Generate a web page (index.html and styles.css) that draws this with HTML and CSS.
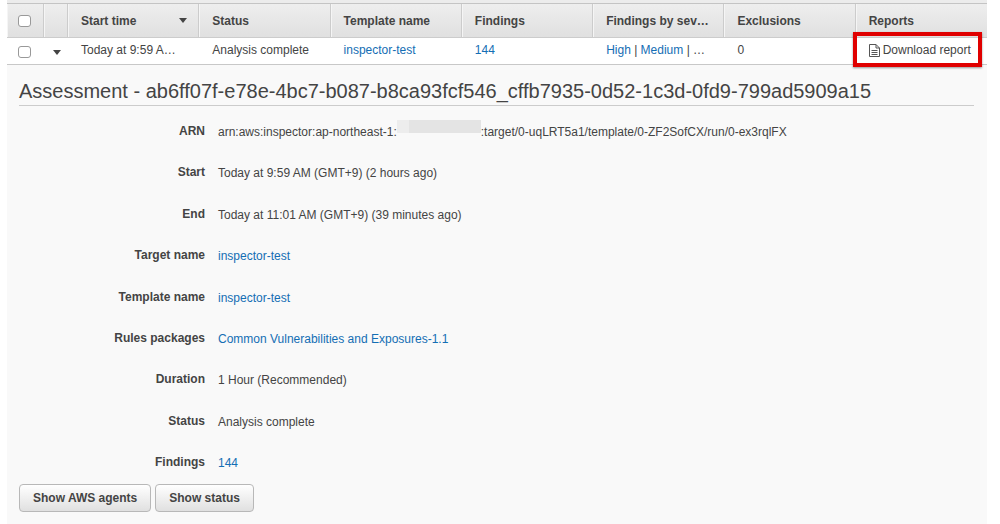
FILE: index.html
```html
<!DOCTYPE html>
<html lang="en">
<head>
<meta charset="utf-8">
<meta name="viewport" content="width=device-width, initial-scale=1">
<title>Assessment runs</title>
<link rel="stylesheet" href="styles.css">
</head>
<body>
<main class="panel">
  <table class="runs">
    <colgroup>
      <col class="col-check"><col class="col-toggle"><col><col><col><col><col><col><col>
    </colgroup>
    <thead>
      <tr>
        <th class="check"><input type="checkbox" aria-label="Select all runs"></th>
        <th></th>
        <th><span class="sortable">Start time <span class="caret"></span></span></th>
        <th>Status</th>
        <th>Template name</th>
        <th>Findings</th>
        <th>Findings by sev…</th>
        <th>Exclusions</th>
        <th>Reports</th>
      </tr>
    </thead>
    <tbody>
      <tr>
        <td class="check"><input type="checkbox" aria-label="Select run"></td>
        <td class="toggle"><button class="expander" type="button" aria-label="Collapse run" aria-expanded="true"><span class="caret"></span></button></td>
        <td>Today at 9:59 A…</td>
        <td>Analysis complete</td>
        <td><a href="#">inspector-test</a></td>
        <td><a href="#">144</a></td>
        <td><a href="#">High</a> | <a href="#">Medium</a> | …</td>
        <td>0</td>
        <td class="report">
          <a class="download" href="#"><svg class="doc" viewBox="0 0 11 13" aria-hidden="true"><path d="M.5 .5H7L10.500 4V12.500H.5ZM7 .5V4H10.500M2.500 6.500H8.500M2.500 8.500H8.500M2.500 10.500H8.500"/></svg>Download report</a>
          <span class="highlight"></span>
        </td>
      </tr>
    </tbody>
  </table>

  <section class="detail">
    <h1>Assessment - ab6ff07f-e78e-4bc7-b087-b8ca93fcf546_cffb7935-0d52-1c3d-0fd9-799ad5909a15</h1>
    <dl class="fields">
      <dt>ARN</dt><dd>arn:aws:inspector:ap-northeast-1:<span class="redacted"></span>:target/0-uqLRT5a1/template/0-ZF2SofCX/run/0-ex3rqlFX</dd>
      <dt>Start</dt><dd>Today at 9:59 AM (GMT+9) (2 hours ago)</dd>
      <dt>End</dt><dd>Today at 11:01 AM (GMT+9) (39 minutes ago)</dd>
      <dt>Target name</dt><dd><a href="#">inspector-test</a></dd>
      <dt>Template name</dt><dd><a href="#">inspector-test</a></dd>
      <dt>Rules packages</dt><dd><a href="#">Common Vulnerabilities and Exposures-1.1</a></dd>
      <dt>Duration</dt><dd>1 Hour (Recommended)</dd>
      <dt>Status</dt><dd>Analysis complete</dd>
      <dt>Findings</dt><dd><a href="#">144</a></dd>
    </dl>
    <div class="actions">
      <button class="btn" type="button">Show AWS agents</button>
      <button class="btn" type="button">Show status</button>
    </div>
  </section>
</main>
</body>
</html>
```
FILE: styles.css
```css
* { box-sizing: border-box; }

body {
  margin: 0;
  background: #fff;
  color: #444;
  font: 12px/16px "Liberation Sans", Arial, sans-serif;
}

a { color: #146eb4; text-decoration: none; }

.panel {
  margin: 0 13px 0 7px;
  min-height: 100vh;
  background: #f9f9f9;
  border-top: 3px solid #ececec;
}

.runs {
  width: 100%;
  table-layout: fixed;
  border-collapse: separate;
  border-spacing: 0;
  border-top: 1px solid #c4c4c4;
}

.col-check { width: 37px; }
.col-toggle { width: 24px; }

.runs th,
.runs td {
  padding: 0 11px 0 13px;
  overflow: hidden;
  text-align: left;
  text-overflow: ellipsis;
  white-space: nowrap;
}

.runs th {
  height: 34px;
  background: linear-gradient(#eee, #e0e0e0);
  border-right: 1px solid #ccc;
  border-bottom: 1px solid #ccc;
  box-shadow: inset 1px 0 #f5f5f5;
  font-weight: bold;
}

.runs th:last-child { border-right: 0; }

.runs td {
  height: 27px;
  padding-bottom: 2px;
  background: #fff;
  border-bottom: 1px solid #c8c8c8;
}

.runs .check { padding: 0 0 0 11px; }
.runs .toggle { padding: 0; text-align: center; }
.runs .report { position: relative; overflow: visible; padding-right: 0; }

input[type="checkbox"] {
  appearance: none;
  display: block;
  width: 13px;
  height: 12px;
  margin: 1px 0 0;
  border: 1px solid #999;
  border-radius: 3px;
  background: #fff;
}

.sortable {
  display: flex;
  align-items: center;
  justify-content: space-between;
}

.caret {
  display: inline-block;
  border: 4px solid transparent;
  border-top: 5px solid #444;
  border-bottom: 0;
}

.expander {
  display: block;
  margin: 0 auto;
  padding: 0 0 0 2px;
  border: 0;
  background: none;
  line-height: 12px;
}

.download {
  display: flex;
  align-items: center;
  gap: 3px;
  color: #444;
}

.doc {
  width: 11px;
  height: 13px;
  fill: none;
  stroke: #555;
}

.highlight {
  position: absolute;
  inset: -6px 5px -3px -3px;
  border: 4px solid #e00000;
  box-shadow: 0 1px 2px rgba(0, 0, 0, .4);
  pointer-events: none;
}

.detail { padding: 13px 13px 12px 12px; }

h1 {
  margin: 0;
  padding-bottom: 1px;
  border-bottom: 1px solid #ccc;
  font-size: 20px;
  font-weight: normal;
  line-height: 26px;
}

.fields {
  display: grid;
  grid-template-columns: 186px 1fr;
  align-content: space-between;
  column-gap: 13px;
  min-height: 365px;
  margin: 0 0 13px;
  padding-top: 17px;
}

dt { font-weight: bold; text-align: right; }
dd { margin: 0; padding-top: 1px; }

.redacted {
  display: inline-block;
  width: 84px;
  height: 13px;
  margin: -4px 0 4px;
  vertical-align: top;
  background: linear-gradient(90deg, #ededed 12px, #e4e4e4 12px);
}

.actions { display: flex; gap: 4px; }

.btn {
  padding: 5px 13px;
  border: 1px solid #b8b8b8;
  border-radius: 4px;
  background: linear-gradient(#fff, #e0e0e0);
  color: #444;
  font: bold 12px/16px "Liberation Sans", Arial, sans-serif;
}
```
